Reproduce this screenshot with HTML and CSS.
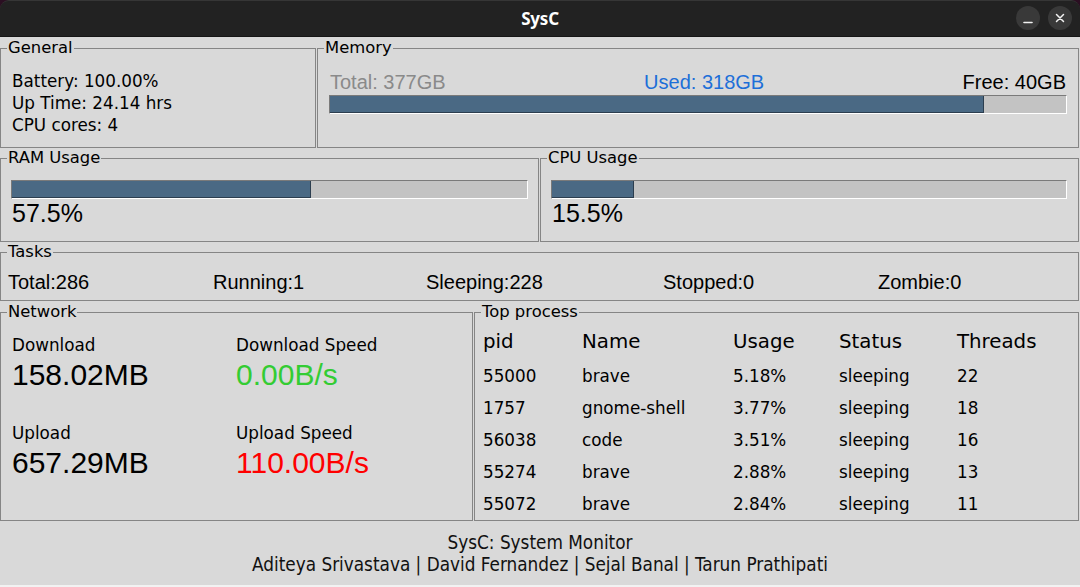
FILE: index.html
```html
<!DOCTYPE html>
<html lang="en">
<head>
<meta charset="utf-8">
<title>SysC</title>
<link rel="stylesheet" href="styles.css">
</head>
<body>
<div class="window">
  <header class="titlebar">
    <span class="title">SysC</span>
    <div class="controls">
      <button class="ctl" aria-label="Minimize"><svg width="24" height="24" viewBox="0 0 24 24"><path d="M8 16.5h8" stroke="#f2f2f2" stroke-width="1.6" stroke-linecap="round"/></svg></button>
      <button class="ctl" aria-label="Close"><svg width="24" height="24" viewBox="0 0 24 24"><path d="M8.5 8.5l7 7M15.5 8.5l-7 7" stroke="#f2f2f2" stroke-width="1.5" stroke-linecap="round"/></svg></button>
    </div>
  </header>

  <main class="app">
    <div class="row row-top">
      <fieldset class="frame general">
        <legend>General</legend>
        <div class="body general-body">
          <div>Battery: 100.00%</div>
          <div>Up Time: 24.14 hrs</div>
          <div>CPU cores: 4</div>
        </div>
      </fieldset>
      <fieldset class="frame memory">
        <legend>Memory</legend>
        <div class="body memory-body">
          <div class="mem-labels">
            <span class="mem-total">Total: 377GB</span>
            <span class="mem-used">Used: 318GB</span>
            <span class="mem-free">Free: 40GB</span>
          </div>
          <div class="bar"><div class="fill" style="width: 88.9%"></div></div>
        </div>
      </fieldset>
    </div>

    <div class="row row-usage">
      <fieldset class="frame ram">
        <legend>RAM Usage</legend>
        <div class="body usage-body">
          <div class="bar"><div class="fill" style="width: 58%"></div></div>
          <div class="pct">57.5%</div>
        </div>
      </fieldset>
      <fieldset class="frame cpu">
        <legend>CPU Usage</legend>
        <div class="body usage-body cpu-body">
          <div class="bar"><div class="fill" style="width: 16%"></div></div>
          <div class="pct">15.5%</div>
        </div>
      </fieldset>
    </div>

    <div class="row row-tasks">
      <fieldset class="frame tasks">
        <legend>Tasks</legend>
        <div class="body tasks-body">
          <span>Total:286</span>
          <span>Running:1</span>
          <span>Sleeping:228</span>
          <span>Stopped:0</span>
          <span>Zombie:0</span>
        </div>
      </fieldset>
    </div>

    <div class="row row-bottom">
      <fieldset class="frame network">
        <legend>Network</legend>
        <div class="body net-body">
          <div class="stat">
            <div class="stat-label">Download</div>
            <div class="stat-value">158.02MB</div>
          </div>
          <div class="stat">
            <div class="stat-label">Download Speed</div>
            <div class="stat-value green">0.00B/s</div>
          </div>
          <div class="stat">
            <div class="stat-label">Upload</div>
            <div class="stat-value">657.29MB</div>
          </div>
          <div class="stat">
            <div class="stat-label">Upload Speed</div>
            <div class="stat-value red">110.00B/s</div>
          </div>
        </div>
      </fieldset>
      <fieldset class="frame top">
        <legend>Top process</legend>
        <div class="body proc-body">
          <div class="proc-row proc-head"><span>pid</span><span>Name</span><span>Usage</span><span>Status</span><span>Threads</span></div>
          <div class="proc-row"><span>55000</span><span>brave</span><span>5.18%</span><span>sleeping</span><span>22</span></div>
          <div class="proc-row"><span>1757</span><span>gnome-shell</span><span>3.77%</span><span>sleeping</span><span>18</span></div>
          <div class="proc-row"><span>56038</span><span>code</span><span>3.51%</span><span>sleeping</span><span>16</span></div>
          <div class="proc-row"><span>55274</span><span>brave</span><span>2.88%</span><span>sleeping</span><span>13</span></div>
          <div class="proc-row"><span>55072</span><span>brave</span><span>2.84%</span><span>sleeping</span><span>11</span></div>
        </div>
      </fieldset>
    </div>

    <footer class="footer">
      <div>SysC: System Monitor</div>
      <div>Aditeya Srivastava | David Fernandez | Sejal Banal | Tarun Prathipati</div>
    </footer>
  </main>
</div>
</body>
</html>
```

FILE: styles.css
```css
* { box-sizing: border-box; }

html, body {
  margin: 0;
  padding: 0;
  width: 1080px;
  height: 587px;
  overflow: hidden;
  background: #2b0f22;
}

.window {
  width: 1080px;
  height: 587px;
  display: flex;
  flex-direction: column;
  font-family: "DejaVu Sans", sans-serif;
  color: #000;
}

/* ---------- title bar ---------- */
.titlebar {
  height: 37px;
  flex: none;
  background: #222222;
  border-radius: 9px 9px 0 0;
  border-top: 1px solid #363636;
  border-bottom: 1px solid #161616;
  display: flex;
  align-items: center;
  justify-content: center;
  position: relative;
}

.title {
  font-family: "Noto Sans", "DejaVu Sans", sans-serif;
  font-weight: 700;
  font-size: 17px;
  color: #ffffff;
  letter-spacing: -0.2px;
}

.controls {
  position: absolute;
  right: 8px;
  top: 5px;
  display: flex;
  gap: 8px;
}

.ctl {
  width: 24px;
  height: 24px;
  padding: 0;
  border: none;
  border-radius: 50%;
  background: #393939;
  display: flex;
  align-items: center;
  justify-content: center;
}

/* ---------- main ---------- */
.app {
  flex: 1;
  background: #d9d9d9;
  display: flex;
  flex-direction: column;
  padding-top: 2px;
}

.row {
  display: flex;
  flex: none;
  padding-right: 1px;
}

.row-top { height: 109px; }
.row-usage { height: 93px; margin-top: 1px; }
.row-tasks { height: 58px; margin-top: 1px; }
.row-bottom { height: 218px; margin-top: 2px; }

.frame {
  margin: 0;
  padding: 0;
  min-width: 0;
  height: 100%;
  border: 1px solid #858585;
}

.frame legend {
  margin-left: 6px;
  padding: 0 1px;
  font-family: "DejaVu Sans", sans-serif;
  font-size: 16.4px;
  line-height: 18px;
  color: #000;
}

.general { width: 316px; }
.memory { flex: 1; margin-left: 1px; }
.ram { width: 539px; }
.cpu { flex: 1; margin-left: 1px; }
.tasks { flex: 1; }
.network { width: 473px; }
.top { flex: 1; margin-left: 1px; }

/* general */
.general-body {
  padding: 13px 0 0 11px;
  font-size: 16.8px;
  line-height: 22px;
}

/* memory */
.memory-body {
  padding: 14px 11px 0 11px;
}

.mem-labels {
  display: flex;
  justify-content: space-between;
  padding: 0 1px;
  font-family: "Liberation Sans", Arial, sans-serif;
  font-size: 20px;
  line-height: 23px;
}

.mem-total { color: #8a8a8a; }
.mem-used { color: #1d6fd8; }
.mem-free { color: #000; }

.memory-body .bar { margin-top: 1px; }

/* progress bar */
.bar {
  height: 19px;
  background: #c3c3c3;
  border: 1px solid;
  border-color: #7a7a7a #ffffff #ffffff #7a7a7a;
}

.fill {
  height: 100%;
  background: #4a6984;
  border-right: 1px solid #2c3e4f;
  border-bottom: 1px solid #2c3e4f;
}

/* usage */
.usage-body {
  padding: 13px 10px 0 10px;
}
.cpu-body { padding-right: 11px; }

.pct {
  margin-left: 1px;
  font-family: "Liberation Sans", Arial, sans-serif;
  font-size: 25px;
  line-height: 29px;
}

/* tasks */
.tasks-body {
  display: grid;
  grid-template-columns: 205px 213px 237px 215px 1fr;
  padding: 10px 0 0 7px;
  font-family: "Liberation Sans", Arial, sans-serif;
  font-size: 20px;
  line-height: 23px;
}

/* network */
.net-body {
  display: grid;
  grid-template-columns: 224px 1fr;
  row-gap: 31px;
  padding: 14px 0 0 11px;
}

.stat-label {
  font-size: 16.8px;
  line-height: 20px;
}

.stat-value {
  margin-top: 3px;
  font-family: "Liberation Sans", Arial, sans-serif;
  font-size: 30px;
  line-height: 34px;
}

.green { color: #33cc33; }
.red { color: #ff0000; }

/* top process */
.proc-body {
  padding: 3px 0 0 8px;
}

.proc-row {
  display: grid;
  grid-template-columns: 99px 151px 106px 118px 1fr;
  font-size: 16.8px;
  line-height: 32px;
}

.proc-head {
  font-size: 19.8px;
  line-height: 36px;
}

/* footer */
.footer {
  flex: 1;
  padding-top: 11px;
  text-align: center;
  font-family: "DejaVu Sans Condensed", "DejaVu Sans", sans-serif;
  font-stretch: condensed;
  font-size: 18.8px;
  line-height: 22px;
  color: #111;
  border-bottom: 2px solid #f2f2f2;
}
```
